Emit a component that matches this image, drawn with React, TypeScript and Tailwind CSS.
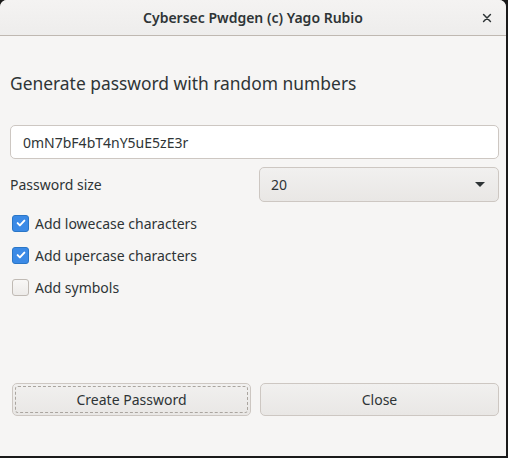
import { useState } from "react";

function CheckRow({ label, checked, onToggle }: { label: string; checked: boolean; onToggle: () => void }) {
  return (
    <button onClick={onToggle} className="flex h-[32px] items-center gap-[6px] text-left">
      {checked ? (
        <span className="flex h-[17px] w-[17px] items-center justify-center rounded-[3px] border border-[#2a76c6] bg-[#3b8ae6]">
          <svg viewBox="0 0 16 16" className="h-[12px] w-[12px]" fill="none" stroke="white" strokeWidth={2.6} strokeLinecap="round" strokeLinejoin="round">
            <path d="M3.5 8.2l3 3 6-6.4" />
          </svg>
        </span>
      ) : (
        <span className="h-[17px] w-[17px] rounded-[3px] border border-[#c0bab4] bg-gradient-to-b from-[#f8f7f6] to-[#edebe9]" />
      )}
      <span>{label}</span>
    </button>
  );
}

export default function App() {
  const [lower, setLower] = useState(true);
  const [upper, setUpper] = useState(true);
  const [symbols, setSymbols] = useState(false);

  return (
    <div className="h-[458px] w-[508px] bg-[#1a1a1a] font-['Noto_Sans',sans-serif] text-[14px] text-[#2e3436]">
      <div className="flex h-[456px] w-[506px] flex-col overflow-hidden rounded-t-[7px] bg-[#f6f5f4]">
        {/* Title bar */}
        <div className="relative flex h-[36px] shrink-0 items-center justify-center border-b border-[#bfb8b1] bg-gradient-to-b from-[#f4f3f2] to-[#eeedec]">
          <span className="text-[14px] font-semibold text-[#2e3436]">Cybersec Pwdgen (c) Yago Rubio</span>
          <svg viewBox="0 0 16 16" className="absolute right-[14px] top-[13px] h-[10px] w-[10px]" stroke="#2e3436" strokeWidth={2.4} strokeLinecap="round">
            <path d="M2.5 2.5l11 11M13.5 2.5l-11 11" />
          </svg>
        </div>

        <div className="flex flex-1 flex-col px-[10px] pr-[7px]">
          <h1 className="mt-[34px] h-[26px] text-[17.4px] leading-[26px] text-[#2e3436]">Generate password with random numbers</h1>

          <div className="mt-[29px] flex h-[34px] items-center rounded-[5px] border border-[#cdc7c2] bg-white px-[12px]">
            0mN7bF4bT4nY5uE5zE3r
          </div>

          <div className="mt-[8px] grid grid-cols-2 items-center gap-[9px]">
            <span>Password size</span>
            <div className="flex h-[35px] items-center justify-between rounded-[5px] border border-[#cdc7c2] bg-gradient-to-b from-[#f1f0ef] to-[#e9e7e5] pl-[11px] pr-[13px]">
              <span>20</span>
              <svg viewBox="0 0 10 5" className="h-[5px] w-[10px]" fill="#2e3436">
                <path d="M0 0h10L5 5z" />
              </svg>
            </div>
          </div>

          <div className="mt-[5px] flex flex-col items-start pl-[2px]">
            <CheckRow label="Add lowecase characters" checked={lower} onToggle={() => setLower((v) => !v)} />
            <CheckRow label="Add upercase characters" checked={upper} onToggle={() => setUpper((v) => !v)} />
            <CheckRow label="Add symbols" checked={symbols} onToggle={() => setSymbols((v) => !v)} />
          </div>

          <div className="mt-[80px] grid grid-cols-2 gap-[9px] pl-[2px]">
            <button className="relative h-[33px] rounded-[5px] border border-[#cdc7c2] bg-gradient-to-b from-[#f1f0ef] to-[#e9e7e5]">
              <span className="absolute inset-[2px] rounded-[3px] border border-dashed border-[#aaa59f]" />
              Create Password
            </button>
            <button className="h-[33px] rounded-[5px] border border-[#cdc7c2] bg-gradient-to-b from-[#f1f0ef] to-[#e9e7e5]">
              Close
            </button>
          </div>
        </div>
      </div>
    </div>
  );
}
